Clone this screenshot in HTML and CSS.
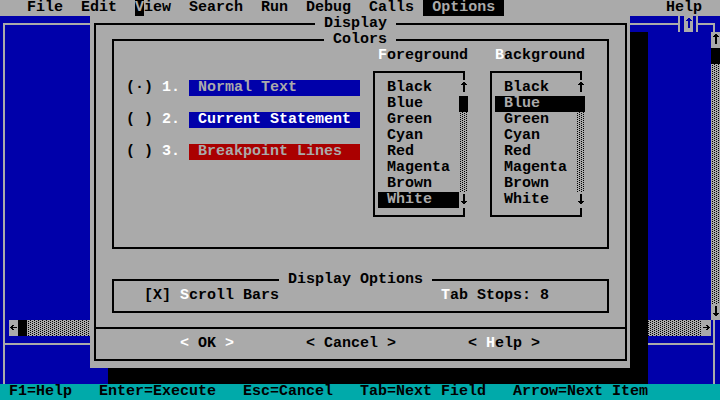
FILE: index.html
```html
<!DOCTYPE html>
<html>
<head>
<meta charset="utf-8">
<title>Display</title>
<link rel="stylesheet" href="styles.css">
</head>
<body>
<div class="screen">
  <nav class="menubar">
    <span class="menu">File</span>
    <span class="menu">Edit</span>
    <span class="menu"><span class="mouse">V</span>iew</span>
    <span class="menu">Search</span>
    <span class="menu">Run</span>
    <span class="menu">Debug</span>
    <span class="menu">Calls</span>
    <span class="menu active">Options</span>
    <span class="menu help">Help</span>
  </nav>

  <div class="editor">
    <fieldset class="frame">
      <legend class="maxbtn"><span class="maxcell"><svg class="glyph" viewBox="0 0 9 16"><path d="M4 2h2v1h1v1h1v1h-2v7h-2v-7h-2v-1h1v-1h1z"/></svg></span></legend>
      <div class="ed-main">
        <div class="code"></div>
        <div class="vscroll">
          <span class="sb-btn"><svg class="glyph" viewBox="0 0 9 16"><path d="M4 2h2v1h1v1h1v1h-2v7h-2v-7h-2v-1h1v-1h1z"/></svg></span>
          <span class="thumb"></span>
          <span class="track"></span>
          <span class="sb-btn"><svg class="glyph" viewBox="0 0 9 16"><path d="M4 2h2v7h2v1h-1v1h-1v1h-2v-1h-1v-1h-1v-1h2z"/></svg></span>
        </div>
      </div>
      <div class="hscroll">
        <span class="sb-btn"><svg class="glyph" viewBox="0 0 9 16"><path d="M3 5h2v1h-2z M2 6h2v1h-2z M1 7h7v1h-7z M2 8h2v1h-2z M3 9h2v1h-2z"/></svg></span>
        <span class="thumb"></span>
        <span class="track"></span>
        <span class="sb-btn"><svg class="glyph" viewBox="0 0 9 16"><path d="M4 5h2v1h-2z M5 6h2v1h-2z M1 7h7v1h-7z M5 8h2v1h-2z M4 9h2v1h-2z"/></svg></span>
      </div>
      <div class="divider"></div>
      <div class="immediate"></div>
    </fieldset>
  </div>

  <footer class="statusbar">F1=Help   Enter=Execute   Esc=Cancel   Tab=Next Field   Arrow=Next Item</footer>

  <div class="dialog">
    <fieldset class="dlg-frame">
      <legend class="title title-display">Display</legend>

      <fieldset class="group colors">
        <legend class="title title-colors">Colors</legend>
        <div class="colors-body">
          <div class="radios">
            <div class="radio">(·) <span class="w">1.</span> <span class="swatch normal">Normal Text</span></div>
            <div class="radio">( ) <span class="w">2.</span> <span class="swatch current">Current Statement</span></div>
            <div class="radio">( ) <span class="w">3.</span> <span class="swatch bp">Breakpoint Lines</span></div>
          </div>

          <div class="list-col fg">
            <div class="list-head"><span class="w">F</span>oreground</div>
            <div class="listbox">
              <ul class="items">
                <li>Black</li>
                <li>Blue</li>
                <li>Green</li>
                <li>Cyan</li>
                <li>Red</li>
                <li>Magenta</li>
                <li>Brown</li>
                <li class="sel">White</li>
              </ul>
              <div class="lscroll">
                <span class="lbtn"><svg class="glyph" viewBox="0 0 9 16"><path d="M4 2h2v1h1v1h1v1h-2v7h-2v-7h-2v-1h1v-1h1z"/></svg></span>
                <span class="thumb"></span>
                <span class="track"></span>
                <span class="lbtn"><svg class="glyph" viewBox="0 0 9 16"><path d="M4 2h2v7h2v1h-1v1h-1v1h-2v-1h-1v-1h-1v-1h2z"/></svg></span>
              </div>
            </div>
          </div>

          <div class="list-col bg">
            <div class="list-head"><span class="w">B</span>ackground</div>
            <div class="listbox">
              <ul class="items">
                <li>Black</li>
                <li class="sel">Blue</li>
                <li>Green</li>
                <li>Cyan</li>
                <li>Red</li>
                <li>Magenta</li>
                <li>Brown</li>
                <li>White</li>
              </ul>
              <div class="lscroll">
                <span class="lbtn"><svg class="glyph" viewBox="0 0 9 16"><path d="M4 2h2v1h1v1h1v1h-2v7h-2v-7h-2v-1h1v-1h1z"/></svg></span>
                <span class="thumb"></span>
                <span class="track"></span>
                <span class="lbtn"><svg class="glyph" viewBox="0 0 9 16"><path d="M4 2h2v7h2v1h-1v1h-1v1h-2v-1h-1v-1h-1v-1h2z"/></svg></span>
              </div>
            </div>
          </div>
        </div>
      </fieldset>

      <fieldset class="group opts">
        <legend class="title title-opts">Display Options</legend>
        <div class="opts-row">
          <span>[X] <span class="w">S</span>croll Bars</span>
          <span class="tabstops"><span class="w">T</span>ab Stops: 8</span>
        </div>
      </fieldset>

      <div class="sep"></div>

      <div class="buttons">
        <span class="btn"><span class="w">&lt;</span> OK <span class="w">&gt;</span></span>
        <span class="btn">&lt; Cancel &gt;</span>
        <span class="btn">&lt; <span class="w">H</span>elp &gt;</span>
      </div>
    </fieldset>
  </div>
</div>
</body>
</html>
```
FILE: styles.css
```css
* { box-sizing: border-box; }
html, body { margin: 0; padding: 0; }
body {
  width: 720px;
  height: 400px;
  overflow: hidden;
  background: #000;
  color: #000;
  font: bold 15px/16px "Liberation Mono", "DejaVu Sans Mono", monospace;
}
.screen { position: relative; width: 720px; height: 400px; }

/* menu bar (row 0) */
.menubar {
  display: flex;
  height: 16px;
  background: #aaa;
  padding: 0 9px 0 18px;
  white-space: pre;
}
.menu { padding: 0 9px; }
.menu.active { background: #000; color: #aaa; }
.menu.help { margin-left: auto; }
.mouse { background: #000; color: #aaa; }

.glyph { display: block; width: 9px; height: 16px; fill: currentColor; shape-rendering: crispEdges; }

/* editor window behind the dialog */
.editor { height: 368px; background: #0000aa; padding: 0 5px 0 3px; }
.frame {
  margin: 0;
  padding: 0;
  min-width: 0;
  border: 2px solid #aaa;
  border-bottom: 0;
}
.maxbtn {
  margin-left: 673px;
  padding: 0 3px 0 4px;
  height: 16px;
  border-left: 2px solid #aaa;
  border-right: 2px solid #aaa;
}
.maxcell { display: block; width: 9px; height: 16px; background: #aaa; color: #0000aa; }

.ed-main { display: flex; height: 288px; }
.code { flex: 1; }
.vscroll { width: 9px; margin-right: -7px; display: flex; flex-direction: column; }
.sb-btn { display: block; width: 9px; height: 16px; background: #aaa; color: #000; flex: none; }
.thumb { display: block; width: 9px; height: 16px; background: #000; flex: none; }
.track {
  display: block;
  flex: 1;
  background-color: #aaa;
  background-image:
    conic-gradient(from 270deg at 1px 1px, #000 90deg, transparent 0),
    conic-gradient(from 270deg at 1px 1px, #000 90deg, transparent 0);
  background-size: 4px 2px;
  background-position: 3px 0, 1px 1px;
}
.hscroll { display: flex; height: 16px; padding-left: 4px; margin-right: 2px; }
.divider { margin-top: 7px; height: 9px; border-top: 2px solid #aaa; }
.immediate { height: 32px; }

/* status bar (row 24) */
.statusbar {
  height: 16px;
  background: #00aaaa;
  padding-left: 9px;
  white-space: pre;
}

/* dialog */
.dialog {
  position: absolute;
  left: 90px;
  top: 16px;
  width: 540px;
  height: 352px;
  background: #aaa;
  box-shadow: 18px 16px 0 #000;
}
.dlg-frame {
  margin: 0 3px 0 4px;
  padding: 0 0 7px;
  min-width: 0;
  border: 2px solid #000;
}
.title { padding: 0 9px; height: 16px; line-height: 16px; white-space: pre; }
.title-display { margin-left: 219px; }
.title-colors { margin-left: 210px; }
.title-opts { margin-left: 165px; }

.group { margin: 0 16px; padding: 0; min-width: 0; border: 2px solid #000; }
.opts { margin-top: 23px; }

.colors-body { display: flex; height: 199px; padding-left: 12px; }
.radios { width: 234px; padding-top: 32px; display: flex; flex-direction: column; gap: 16px; }
.radio { height: 16px; white-space: pre; }
.swatch { display: inline-block; width: 171px; padding-left: 9px; }
.swatch.normal { background: #0000aa; color: #aaa; }
.swatch.current { background: #0000aa; color: #fff; }
.swatch.bp { background: #aa0000; color: #aaa; }
.w { color: #fff; }

.list-col { width: 92px; flex: none; }
.list-col.fg { margin-left: 13px; }
.list-col.bg { margin-left: 25px; }
.list-head { padding-left: 5px; height: 16px; white-space: nowrap; }
.listbox {
  margin-top: 7px;
  width: 92px;
  border: 2px solid #000;
  padding: 7px 0 7px 3px;
  display: flex;
}
.items { list-style: none; margin: 0; padding: 0; width: 81px; flex: none; }
.items li { height: 16px; padding-left: 9px; }
.items li.sel { background: #000; color: #aaa; }
.lscroll { width: 9px; flex: none; margin-right: -5px; display: flex; flex-direction: column; }
.lbtn { display: block; width: 9px; height: 16px; background: #aaa; color: #000; flex: none; }

.opts-row { display: flex; height: 23px; padding: 0 0 7px 30px; white-space: pre; }
.tabstops { margin-left: 162px; }

.sep { margin-top: 14px; border-top: 2px solid #000; }
.buttons { display: flex; gap: 72px; padding-left: 84px; margin-top: 7px; height: 16px; white-space: pre; }
```
